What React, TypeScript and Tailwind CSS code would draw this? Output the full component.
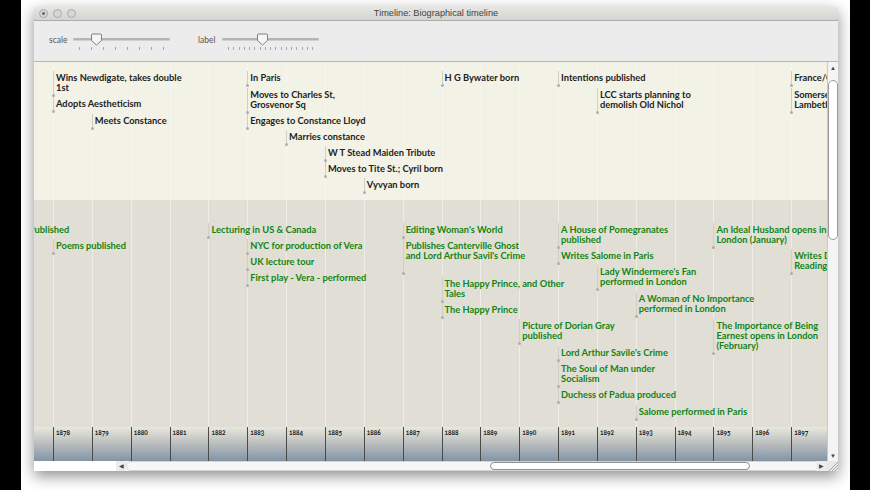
const YEARS = Array.from({ length: 20 }, (_, i) => 1878 + i);

// x position of a year inside the timeline canvas
const yearX = (year: number) => 19 + (year - 1878) * 38.85;

type Event = {
  year: number;
  top: number;
  height: number;
  lines: string[];
};

const lifeEvents: Event[] = [
  { year: 1878, top: 9, height: 26, lines: ["Wins Newdigate, takes double", "1st"] },
  { year: 1878, top: 35, height: 16, lines: ["Adopts Aestheticism"] },
  { year: 1879, top: 52, height: 16, lines: ["Meets Constance"] },
  { year: 1883, top: 9, height: 16, lines: ["In Paris"] },
  { year: 1883, top: 26, height: 26, lines: ["Moves to Charles St,", "Grosvenor Sq"] },
  { year: 1883, top: 52, height: 16, lines: ["Engages to Constance Lloyd"] },
  { year: 1884, top: 68, height: 16, lines: ["Marries constance"] },
  { year: 1885, top: 84, height: 16, lines: ["W T Stead Maiden Tribute"] },
  { year: 1885, top: 100, height: 16, lines: ["Moves to Tite St.; Cyril born"] },
  { year: 1886, top: 116, height: 16, lines: ["Vyvyan born"] },
  { year: 1888, top: 9, height: 16, lines: ["H G Bywater born"] },
  { year: 1891, top: 9, height: 16, lines: ["Intentions published"] },
  { year: 1892, top: 26, height: 26, lines: ["LCC starts planning to", "demolish Old Nichol"] },
  { year: 1897, top: 9, height: 16, lines: ["France/Germany"] },
  { year: 1897, top: 26, height: 26, lines: ["Somerset House", "Lambeth"] },
];

const workEvents: Event[] = [
  { year: 1877.3, top: 23, height: 16, lines: ["Published"] },
  { year: 1878, top: 39, height: 16, lines: ["Poems published"] },
  { year: 1882, top: 23, height: 16, lines: ["Lecturing in US & Canada"] },
  { year: 1883, top: 39, height: 16, lines: ["NYC for production of Vera"] },
  { year: 1883, top: 55, height: 16, lines: ["UK lecture tour"] },
  { year: 1883, top: 71, height: 16, lines: ["First play - Vera - performed"] },
  { year: 1887, top: 23, height: 16, lines: ["Editing Woman's World"] },
  { year: 1887, top: 39, height: 36, lines: ["Publishes Canterville Ghost", "and Lord Arthur Savil's Crime"] },
  { year: 1888, top: 77, height: 26, lines: ["The Happy Prince, and Other", "Tales"] },
  { year: 1888, top: 103, height: 16, lines: ["The Happy Prince"] },
  { year: 1890, top: 119, height: 26, lines: ["Picture of Dorian Gray", "published"] },
  { year: 1891, top: 23, height: 26, lines: ["A House of Pomegranates", "published"] },
  { year: 1891, top: 49, height: 16, lines: ["Writes Salome in Paris"] },
  { year: 1892, top: 65, height: 26, lines: ["Lady Windermere's Fan", "performed in London"] },
  { year: 1893, top: 92, height: 26, lines: ["A Woman of No Importance", "performed in London"] },
  { year: 1891, top: 146, height: 16, lines: ["Lord Arthur Savile's Crime"] },
  { year: 1891, top: 162, height: 26, lines: ["The Soul of Man under", "Socialism"] },
  { year: 1891, top: 188, height: 16, lines: ["Duchess of Padua produced"] },
  { year: 1893, top: 205, height: 16, lines: ["Salome performed in Paris"] },
  { year: 1895, top: 23, height: 26, lines: ["An Ideal Husband opens in", "London (January)"] },
  { year: 1895, top: 119, height: 36, lines: ["The Importance of Being", "Earnest opens in London", "(February)"] },
  { year: 1897, top: 49, height: 26, lines: ["Writes De Profundis", "Reading Gaol"] },
];

function Band({ events, className, lineClass, textClass }: { events: Event[]; className: string; lineClass: string; textClass: string }) {
  return (
    <div className={`relative overflow-hidden ${className}`}>
      {YEARS.map((year) => (
        <div
          key={year}
          className={`absolute top-0 bottom-0 w-px ${lineClass}`}
          style={{ left: yearX(year) }}
        />
      ))}
      {events.map((event) => (
        <div
          key={event.lines[0]}
          className="absolute"
          style={{ left: yearX(event.year), top: event.top, height: event.height }}
        >
          <div className="absolute top-0 bottom-0 left-0 w-px bg-[#cfcfc8]" />
          <div className="absolute bottom-0 left-[-1px] size-[3px] rounded-full bg-[#aeaeae]" />
          <div className={`pl-[3px] pt-[2px] text-[9.3px] leading-[10px] font-bold whitespace-nowrap ${textClass}`}>
            {event.lines.map((line) => (
              <div key={line}>{line}</div>
            ))}
          </div>
        </div>
      ))}
    </div>
  );
}

function Slider({ label, ticks, knob }: { label: string; ticks: number; knob: number }) {
  return (
    <div className="flex items-start gap-[7px]">
      <span className="mt-[-3px] w-[17px] text-[8.5px] leading-[10px] text-[#555]">{label}</span>
      <div className="relative w-[97px]">
        <div className="h-[3px] rounded-full border-b border-[#d0d0d0] bg-[#b4b4b4]" />
        <svg
          className="absolute top-[-5px]"
          style={{ left: knob }}
          width="11"
          height="13"
          viewBox="0 0 11 13"
        >
          <path d="M1.5 1 H9.5 Q10.5 1 10.5 2 V7.5 L5.5 12 L.5 7.5 V2 Q.5 1 1.5 1 Z" fill="#f6f6f6" stroke="#7f7f7f" />
        </svg>
        <div className="mt-[6px] flex justify-between px-[6px]">
          {Array.from({ length: ticks }, (_, i) => (
            <div key={i} className="h-[3px] w-px bg-[#a8a8a8]" />
          ))}
        </div>
      </div>
    </div>
  );
}

function Light({ pressed }: { pressed?: boolean }) {
  return (
    <div className="flex size-[9px] items-center justify-center rounded-full border border-[#aaa] bg-[#d6d6d3]">
      {pressed && <div className="size-[3px] rounded-full bg-[#666]" />}
    </div>
  );
}

export default function App() {
  return (
    <div className="flex h-[490px] w-[870px] overflow-hidden bg-black font-['Lato',sans-serif]">
      <div className="w-[21px] shrink-0" />
      <div className="h-full w-[829px] overflow-hidden bg-white pl-[13px] pt-[7px]">
        <div className="flex h-[464px] w-[804px] flex-col shadow-[0_5px_14px_rgba(0,0,0,0.45)]">
          {/* title bar */}
          <div className="relative flex h-[14px] shrink-0 items-center gap-[5px] border-b border-[#a9aca9] bg-gradient-to-b from-[#e6e6e3] to-[#d3d3cf] pl-[5px]">
            <Light pressed />
            <Light />
            <Light />
            <div className="absolute inset-0 flex items-center justify-center pt-px font-['Liberation_Sans',sans-serif] text-[9.2px] text-[#444]">
              Timeline: Biographical timeline
            </div>
          </div>

          {/* toolbar */}
          <div className="flex h-[41px] shrink-0 gap-[28px] border-b border-[#b4b4b0] bg-[#ececec] pl-[15px] pt-[17px]">
            <Slider label="scale" ticks={8} knob={18} />
            <Slider label="label" ticks={17} knob={35} />
          </div>

          <div className="flex min-h-0 flex-1">
            {/* timeline canvas */}
            <div className="flex min-w-0 flex-1 flex-col overflow-hidden">
              <Band events={lifeEvents} className="h-[138px] shrink-0 bg-[#f2f2e7]" lineClass="bg-white/30" textClass="text-[#222]" />
              <Band events={workEvents} className="h-[227px] shrink-0 bg-[#e1dfd5]" lineClass="bg-white/40" textClass="text-[#138313]" />
              <div className="relative flex-1 bg-gradient-to-b from-[#e8e8dc] via-[#b9bdbd] to-[#8394a6]">
                {YEARS.map((year) => (
                  <div
                    key={year}
                    className="absolute top-0 bottom-0 border-l border-[#4a4a4a] pl-[2px] pt-[2px] text-[6.5px] leading-[8px] font-bold text-[#222] [font-feature-settings:'onum']"
                    style={{ left: yearX(year) }}
                  >
                    {year}
                  </div>
                ))}
              </div>
            </div>

            {/* vertical scroll bar */}
            <div className="flex w-[11px] shrink-0 flex-col border-l border-[#c8c8c8] bg-[#f4f4f4]">
              <div className="flex h-[11px] shrink-0 items-center justify-center text-[6px] leading-none text-[#444]">▲</div>
              <div className="mt-[7px] h-[160px] shrink-0 rounded-full border border-[#9a9a9a] bg-white" />
              <div className="flex-1" />
              <div className="flex h-[11px] shrink-0 items-center justify-center text-[6px] leading-none text-[#444]">▼</div>
            </div>
          </div>

          {/* horizontal scroll bar */}
          <div className="flex h-[10px] shrink-0 items-stretch bg-white">
            <div className="w-[82px] shrink-0 bg-white" />
            <div className="flex w-[10px] shrink-0 items-center justify-center bg-[#ececec] text-[6px] leading-none text-[#444]">◀</div>
            <div className="flex flex-1 rounded-l-full border-y border-l border-[#d4d4d4] bg-[#f7f7f7] pl-[363px]">
              <div className="w-[260px] rounded-full border border-[#8f8f8f] bg-white" />
            </div>
            <div className="flex w-[10px] shrink-0 items-center justify-center bg-[#ececec] text-[6px] leading-none text-[#444]">▶</div>
            <div className="flex w-[12px] shrink-0 items-end justify-end bg-[#e8e8e8]">
              <svg width="10" height="10" viewBox="0 0 10 10">
                <path d="M1 10 L10 1 M4 10 L10 4 M7 10 L10 7" stroke="#a8a8a8" strokeWidth="1" />
              </svg>
            </div>
          </div>
        </div>
      </div>
      <div className="w-[20px] shrink-0" />
    </div>
  );
}
